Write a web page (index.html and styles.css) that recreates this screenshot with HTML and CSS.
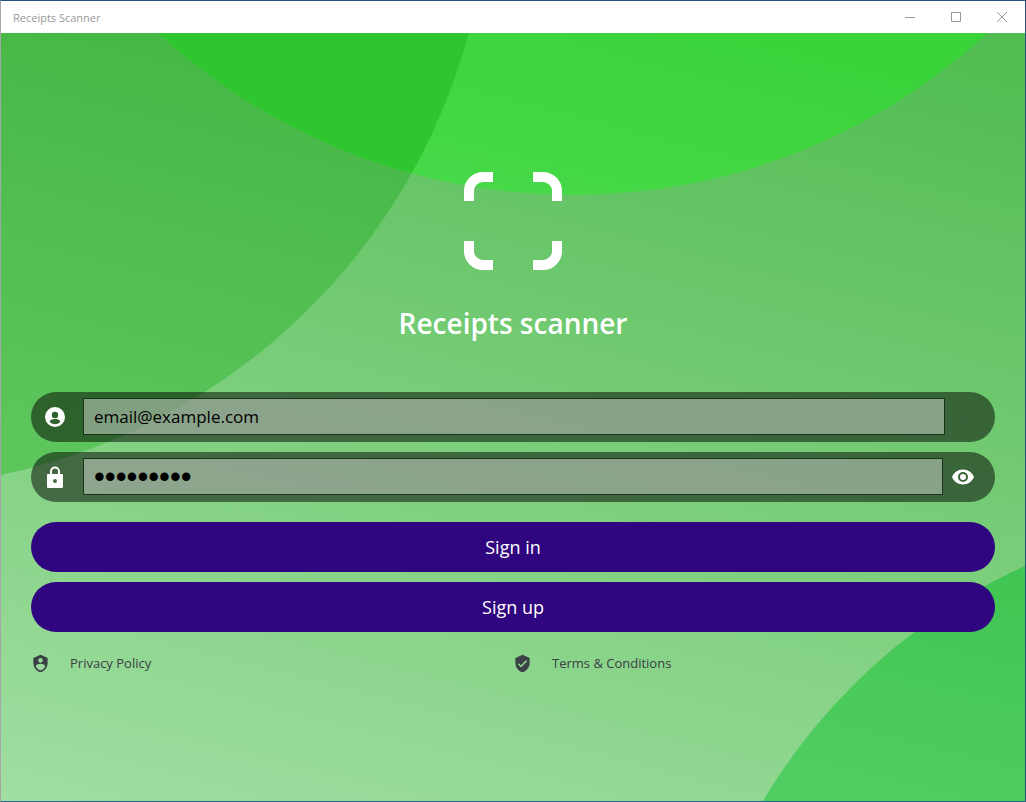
FILE: index.html
```html
<!DOCTYPE html>
<html lang="en">
<head>
<meta charset="utf-8">
<meta name="viewport" content="width=device-width, initial-scale=1">
<title>Receipts Scanner</title>
<link rel="stylesheet" href="styles.css">
</head>
<body>
<div class="window">
  <header class="titlebar">
    <span class="titlebar-text">Receipts Scanner</span>
    <div class="window-controls">
      <button class="window-button" type="button" aria-label="Minimize">
        <svg width="10" height="10" viewBox="0 0 10 10"><path d="M0 5.5h10"/></svg>
      </button>
      <button class="window-button" type="button" aria-label="Maximize">
        <svg width="10" height="10" viewBox="0 0 10 10"><path d="M.5.5h9v9h-9z"/></svg>
      </button>
      <button class="window-button" type="button" aria-label="Close">
        <svg width="10" height="10" viewBox="0 0 10 10"><path d="M0 0l10 10M10 0L0 10"/></svg>
      </button>
    </div>
  </header>

  <main class="page">
    <svg class="backdrop" viewBox="0 0 1024 768" preserveAspectRatio="none" aria-hidden="true">
      <defs>
        <linearGradient id="base" gradientUnits="userSpaceOnUse" x1="720" y1="-60" x2="478" y2="886">
          <stop offset="0" stop-color="#51bc51"/><stop offset="1" stop-color="#a0dea1"/>
        </linearGradient>
        <linearGradient id="left" gradientUnits="userSpaceOnUse" x1="240" y1="0" x2="130" y2="430">
          <stop offset="0" stop-color="#44b744"/><stop offset="1" stop-color="#5cc55c"/>
        </linearGradient>
        <linearGradient id="top" gradientUnits="userSpaceOnUse" x1="600" y1="-40" x2="540" y2="190">
          <stop offset="0" stop-color="#3ad33a"/><stop offset="1" stop-color="#48d948"/>
        </linearGradient>
        <linearGradient id="corner" gradientUnits="userSpaceOnUse" x1="1010" y1="530" x2="950" y2="770">
          <stop offset="0" stop-color="#40c552"/><stop offset="1" stop-color="#4fcd60"/>
        </linearGradient>
        <clipPath id="leftClip"><circle cx="-126" cy="-160" r="615"/></clipPath>
      </defs>
      <rect width="1024" height="768" fill="url(#base)"/>
      <circle cx="-126" cy="-160" r="615" fill="url(#left)"/>
      <circle cx="572" cy="-450" r="612" fill="url(#top)"/>
      <circle cx="572" cy="-450" r="612" fill="#2fc52f" clip-path="url(#leftClip)"/>
      <circle cx="1271" cy="1072" r="593" fill="url(#corner)"/>
    </svg>

    <div class="content">
      <svg class="logo" viewBox="0 0 98 98" aria-hidden="true">
        <path d="M5 29V19A14 14 0 0 1 19 5H29M69 5H79A14 14 0 0 1 93 19V29M93 69V79A14 14 0 0 1 79 93H69M29 93H19A14 14 0 0 1 5 79V69"/>
      </svg>
      <h1 class="heading">Receipts scanner</h1>

      <form class="form">
        <div class="field">
          <label class="field-icon" for="email" aria-label="Email">
            <svg width="24" height="24" viewBox="0 0 24 24"><path fill-rule="evenodd" d="M12 2a10 10 0 1 0 0 20 10 10 0 0 0 0-20zm0 4.800a3.200 3.200 0 1 1 0 6.400 3.200 3.200 0 0 1 0-6.400zM12 19.200c-2.200 0-4.200-.9-5.300-2.700 0-1.700 3.500-2.600 5.300-2.600s5.300.9 5.300 2.600c-1.100 1.800-3.100 2.700-5.300 2.700z"/></svg>
          </label>
          <input class="field-input" id="email" type="email" value="email@example.com">
          <span class="field-end"></span>
        </div>
        <div class="field">
          <label class="field-icon" for="password" aria-label="Password">
            <svg width="24" height="24" viewBox="0 0 24 24"><path fill-rule="evenodd" d="M19 9H17V6.500a5 5 0 0 0-10 0V9H5a1 1 0 0 0-1 1V22a1 1 0 0 0 1 1h14a1 1 0 0 0 1-1V10a1 1 0 0 0-1-1zM12 18a2 2 0 1 1 0-4 2 2 0 0 1 0 4zM9 9V6.500a3 3 0 0 1 6 0V9z"/></svg>
          </label>
          <input class="field-input field-input-masked" id="password" type="password" value="password1">
          <button class="field-end field-toggle" type="button" aria-label="Show password">
            <svg width="24" height="24" viewBox="0 0 24 24"><path fill-rule="evenodd" d="M12 4.500C7 4.500 2.700 7.600 1 12c1.700 4.400 6 7.500 11 7.500s9.300-3.100 11-7.500c-1.700-4.400-6-7.500-11-7.500zM12 17a5 5 0 1 1 0-10 5 5 0 0 1 0 10zm0-8a3 3 0 1 0 0 6 3 3 0 0 0 0-6z"/></svg>
          </button>
        </div>
        <div class="actions">
          <button class="action" type="button">Sign in</button>
          <button class="action" type="button">Sign up</button>
        </div>
      </form>

      <nav class="links">
        <a class="link" href="#privacy">
          <svg width="19" height="19" viewBox="0 0 24 24"><path fill-rule="evenodd" d="M12 1L3 5v6c0 5.550 3.840 10.740 9 12 5.160-1.260 9-6.450 9-12V5zm0 4a3 3 0 1 1 0 6 3 3 0 0 1 0-6zm5.130 12A9.700 9.700 0 0 1 12 20.920 9.700 9.700 0 0 1 6.870 17c-.34-.5-.63-1-.87-1.530C6 13.820 8.710 12.470 12 12.470s6 1.320 6 3c-.24.530-.53 1.030-.87 1.530z"/></svg>
          Privacy Policy
        </a>
        <a class="link" href="#terms">
          <svg width="19" height="19" viewBox="0 0 24 24"><path fill-rule="evenodd" d="M12 1L3 5v6c0 5.550 3.840 10.740 9 12 5.160-1.260 9-6.450 9-12V5zM10 17l-4-4 1.410-1.410L10 14.170l6.590-6.590L18 9z"/></svg>
          Terms &amp; Conditions
        </a>
      </nav>
    </div>
  </main>
</div>
</body>
</html>
```
FILE: styles.css
```css
* { box-sizing: border-box; }

body {
  margin: 0;
  font-family: "Open Sans", "Noto Sans", sans-serif;
}

button { font: inherit; }

.window {
  display: flex;
  flex-direction: column;
  min-height: 100vh;
  border: 1px solid #28517f;
  border-left-color: #a6a6a6;
  border-bottom-color: #2b6494;
}

.titlebar {
  display: flex;
  align-items: center;
  justify-content: space-between;
  height: 32px;
  padding-left: 12px;
  background: #fff;
  color: #999;
  font-size: 11px;
}

.window-controls {
  display: flex;
  align-self: stretch;
}

.window-button {
  display: flex;
  align-items: center;
  justify-content: center;
  width: 46px;
  padding: 0;
  border: 0;
  background: none;
}

.window-button svg {
  fill: none;
  stroke: #999;
}

.page {
  position: relative;
  flex: 1;
}

.backdrop {
  position: absolute;
  width: 100%;
  height: 100%;
}

.content {
  position: relative;
  display: flex;
  flex-direction: column;
  padding: 139px 30px 30px;
}

.logo {
  align-self: center;
  width: 98px;
  height: 98px;
  fill: none;
  stroke: #fff;
  stroke-width: 10px;
}

.heading {
  margin: 34px 0 50px;
  color: #fff;
  font-size: 28px;
  font-weight: 600;
  line-height: 38px;
  text-align: center;
}

.form {
  display: flex;
  flex-direction: column;
  gap: 10px;
}

.field {
  display: flex;
  align-items: center;
  height: 50px;
  padding: 0 0 1px 12px;
  border-radius: 25px;
  background: rgb(0 0 0 / 50%);
}

.field-icon {
  display: flex;
  width: 40px;
}

.field svg { fill: #fff; }

.field-input {
  flex: 1;
  min-width: 0;
  height: 37px;
  padding: 0 10px;
  border: 1px solid #1b321b;
  border-radius: 0;
  outline: 0;
  background: rgb(255 255 255 / 40%);
  color: #000;
  font-family: inherit;
  font-size: 17px;
}

.field-input-masked {
  font-family: "Liberation Sans", Arial, sans-serif;
  font-size: 31px;
}

.field-end {
  display: flex;
  width: 50px;
  padding: 0 0 0 8px;
  border: 0;
  background: none;
}

.field-toggle { width: 52px; }

.actions {
  display: flex;
  flex-direction: column;
  gap: 10px;
  margin-top: 10px;
}

.action {
  height: 50px;
  border: 0;
  border-radius: 25px;
  background: #300680;
  color: #fff;
  font-size: 18px;
}

.links {
  display: grid;
  grid-template-columns: 1fr 1fr;
  margin-top: 21px;
}

.link {
  display: flex;
  align-items: center;
  gap: 20px;
  color: #3a4045;
  font-size: 13px;
  line-height: 20px;
  text-decoration: none;
}

.link svg { fill: #3a4045; }
```
